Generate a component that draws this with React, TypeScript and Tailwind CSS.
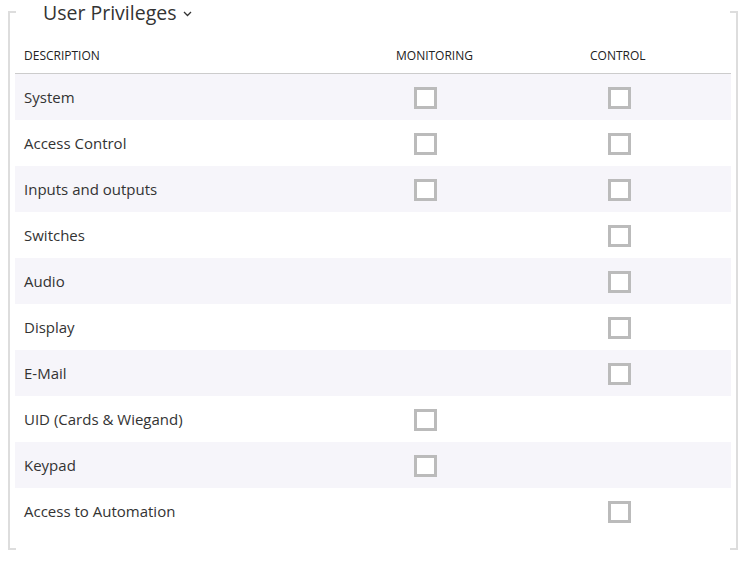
const rows: { label: string; mon: boolean; ctl: boolean }[] = [
  { label: "System", mon: true, ctl: true },
  { label: "Access Control", mon: true, ctl: true },
  { label: "Inputs and outputs", mon: true, ctl: true },
  { label: "Switches", mon: false, ctl: true },
  { label: "Audio", mon: false, ctl: true },
  { label: "Display", mon: false, ctl: true },
  { label: "E-Mail", mon: false, ctl: true },
  { label: "UID (Cards & Wiegand)", mon: true, ctl: false },
  { label: "Keypad", mon: true, ctl: false },
  { label: "Access to Automation", mon: false, ctl: true },
];

function Box() {
  return <div className="mt-[2px] h-[22px] w-[23px] border-[3px] border-[#bbbbbb] bg-white" />;
}

export default function App() {
  return (
    <div
      className="h-[561px] w-[749px] bg-white text-[#333]"
      style={{ fontFamily: '"Open Sans", "Noto Sans", sans-serif' }}
    >
      <div className="relative ml-[8px] mt-[11px] h-[539px] w-[730px] border-x-2 border-[#dddddd] pl-[5px] pr-[5px]">
        <div className="absolute left-0 top-0 h-[2px] w-[6px] bg-[#dddddd]" />
        <div className="absolute right-0 top-0 h-[2px] w-[6px] bg-[#dddddd]" />
        <div className="absolute bottom-0 left-0 h-[2px] w-[6px] bg-[#dddddd]" />
        <div className="absolute bottom-0 right-0 h-[2px] w-[6px] bg-[#dddddd]" />

        <div className="absolute -top-[11px] left-[27px] flex items-center gap-[7px] bg-white px-[6px] leading-[26px]">
          <span className="text-[19.5px] font-normal text-[#333]">User Privileges</span>
          <svg width="9" height="6" viewBox="0 0 9 6" className="mt-[2px]">
            <path d="M1 1l3.5 3.5L8 1" fill="none" stroke="#333" strokeWidth="1.3" />
          </svg>
        </div>

        <div className="pt-[33px]">
          <div className="flex h-[30px] items-start border-b border-[#cccccc] pt-[1px] text-[12px] uppercase leading-[22px] text-[#222]">
            <div className="w-[372px] pl-[9px]">Description</div>
            <div className="w-[194px] pl-[9px]">Monitoring</div>
            <div className="flex-1 pl-[9px]">Control</div>
          </div>
          {rows.map((r, i) => (
            <div
              key={r.label}
              className={`flex h-[46px] items-center text-[15px] ${i % 2 === 0 ? "bg-[#f6f5fa]" : "bg-white"}`}
            >
              <div className="w-[372px] pl-[9px]">{r.label}</div>
              <div className="w-[194px] pl-[27px]">{r.mon && <Box />}</div>
              <div className="flex-1 pl-[27px]">{r.ctl && <Box />}</div>
            </div>
          ))}
        </div>
      </div>
    </div>
  );
}
